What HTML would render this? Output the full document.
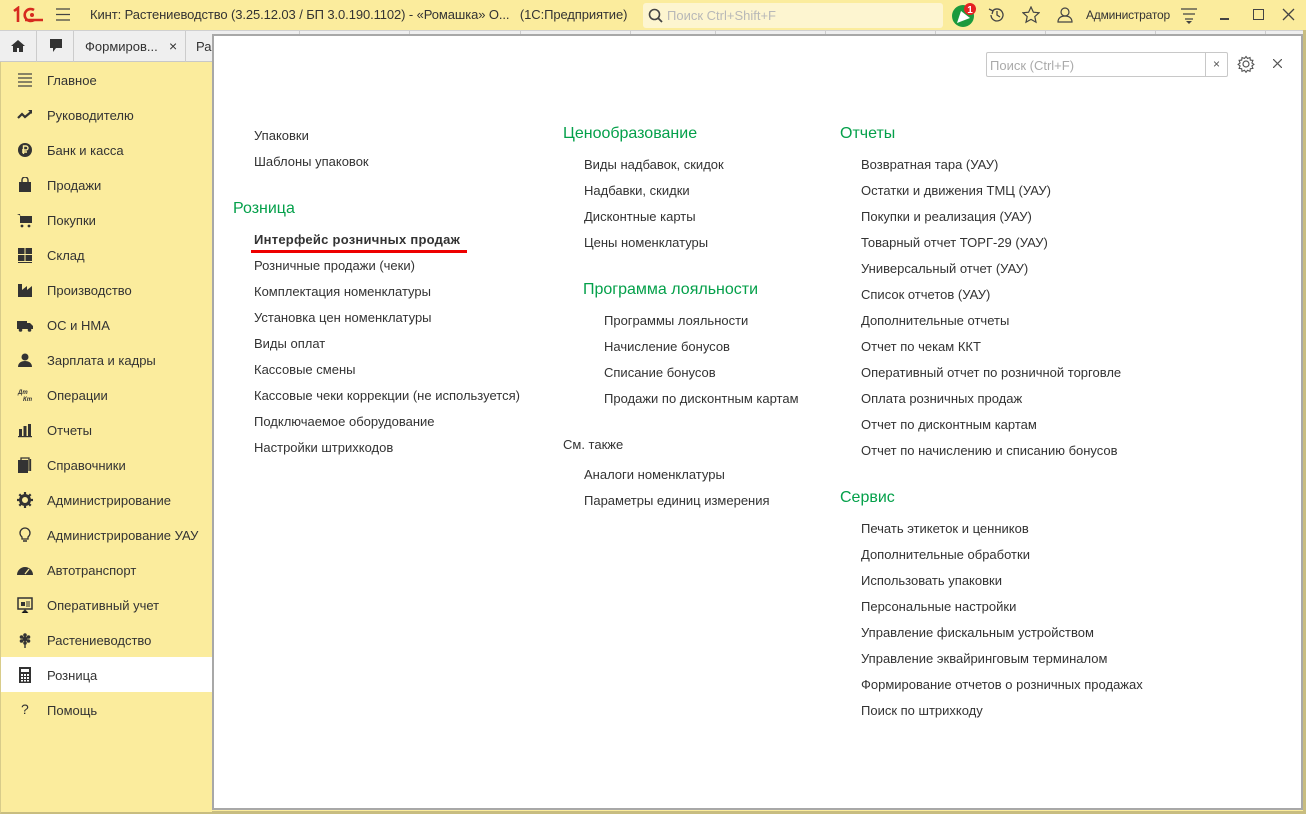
<!DOCTYPE html>
<html><head><meta charset="utf-8"><style>
*{margin:0;padding:0;box-sizing:border-box}
body{width:1306px;height:814px;position:relative;overflow:hidden;background:#fbec9d;font-family:"Liberation Sans",Arial,sans-serif;font-size:13px;color:#333}
.title{position:absolute;left:0;top:0;width:1306px;height:30px;background:#fbec9d}
.title .t{position:absolute;left:90px;top:7px;font-size:13px;color:#333;letter-spacing:-0.1px}
.search{position:absolute;left:643px;top:3px;width:300px;height:25px;background:#fdf5d0;border-radius:3px}
.search span{position:absolute;left:24px;top:5px;color:#b8b8b8;font-size:13px}
.tabs{position:absolute;left:0;top:30px;width:1306px;height:32px;background:#efefef;border-top:1px solid #d0d0d0;border-bottom:1px solid #c8c8c8}
.tabs div{position:absolute;top:0;height:31px;border-right:1px solid #ccc}
.side{position:absolute;left:0;top:62px;width:212px;height:752px;background:#fbec9d;border-left:1px solid #d8cc8a;border-bottom:2px solid #c8bd80}
.side .it{position:absolute;left:0;width:211px;height:35px;font-size:13px;color:#333}
.side .it span{position:absolute;left:46px;top:11px}
.side .it i{position:absolute;left:16px;top:10px;width:16px;height:16px}
.sel{background:#fff}
.panel{position:absolute;left:212px;top:34px;width:1091px;height:776px;background:#fff;border:2px solid #a8a8a8}
.l{position:absolute;font-size:13px;color:#333;white-space:nowrap}
.h{position:absolute;font-size:16px;color:#04a04a;white-space:nowrap}
.fs{position:absolute;left:772px;top:16px;width:242px;height:25px;border:1px solid #c8c8c8;border-radius:2px}
.fs span{position:absolute;left:3px;top:5px;color:#aaa}
.fs b{position:absolute;right:0;top:0;width:22px;height:23px;border-left:1px solid #c8c8c8;font-weight:normal;text-align:center;line-height:22px;font-size:12px;color:#555}
</style></head><body>
<div class="title">
<svg style="position:absolute;left:12px;top:6px" width="32" height="18" viewBox="0 0 32 18"><path d="M2 5l4-3v14" stroke="#d62a1f" stroke-width="2.6" fill="none"/><path d="M22 4a6 6 0 1 0 0 10" stroke="#d62a1f" stroke-width="2.6" fill="none"/><path d="M13 14h18" stroke="#d62a1f" stroke-width="2.4"/><circle cx="20" cy="9" r="2" fill="#d62a1f"/></svg>
<svg style="position:absolute;left:56px;top:8px" width="14" height="13"><path d="M0 1h14M0 6.5h14M0 12h14" stroke="#444" stroke-width="1.3"/></svg>
<div class="t">Кинт: Растениеводство (3.25.12.03 / БП 3.0.190.1102) - «Ромашка» О...&nbsp;&nbsp; (1С:Предприятие)</div>
<div class="search"><svg style="position:absolute;left:5px;top:5px" width="15" height="15"><circle cx="6.5" cy="6.5" r="5" stroke="#444" stroke-width="1.6" fill="none"/><path d="M10 10l4 4" stroke="#444" stroke-width="1.8"/></svg><span>Поиск Ctrl+Shift+F</span></div>
<svg style="position:absolute;left:950px;top:2px" width="30" height="26"><circle cx="13" cy="14" r="11" fill="#1b9a3d"/><path d="M7 21l4-12 9 7z" fill="#fff"/><circle cx="20" cy="7" r="6" fill="#e52222"/><text x="20" y="11" font-size="10" font-weight="bold" fill="#fff" text-anchor="middle" font-family="Liberation Sans">1</text></svg>
<svg style="position:absolute;left:988px;top:6px" width="18" height="18"><path d="M3 9a6 6 0 1 0 2-4.5" stroke="#444" stroke-width="1.3" fill="none"/><path d="M1 3l4 2-1 3" stroke="#444" stroke-width="1.3" fill="none"/><path d="M9 5v4l3 2" stroke="#444" stroke-width="1.3" fill="none"/></svg>
<svg style="position:absolute;left:1022px;top:6px" width="18" height="18"><path d="M9 1l2.4 5.2 5.6.6-4.2 3.8 1.2 5.6L9 13.4 4 16.2l1.2-5.6L1 6.8l5.6-.6z" stroke="#444" stroke-width="1.2" fill="none"/></svg>
<svg style="position:absolute;left:1056px;top:6px" width="18" height="18"><circle cx="9" cy="6" r="4" stroke="#444" stroke-width="1.2" fill="none"/><path d="M2 16c0-4 3-6 7-6s7 2 7 6z" stroke="#444" stroke-width="1.2" fill="none"/></svg>
<div style="position:absolute;left:1086px;top:8px;font-size:12px;color:#333;letter-spacing:-0.2px">Администратор</div>
<svg style="position:absolute;left:1180px;top:7px" width="18" height="18"><path d="M1 2h16M3 7h12M5 12h8" stroke="#444" stroke-width="1.3"/><path d="M6 14l3 3 3-3z" fill="#444"/></svg>
<div style="position:absolute;left:1220px;top:18px;width:9px;height:1.5px;background:#444"></div>
<div style="position:absolute;left:1253px;top:9px;width:11px;height:11px;border:1.5px solid #444"></div>
<svg style="position:absolute;left:1282px;top:8px" width="13" height="13"><path d="M1 1l11 11M12 1L1 12" stroke="#444" stroke-width="1.3"/></svg>
</div>
<div class="tabs">
<div style="left:0;width:37px"><svg style="position:absolute;left:11px;top:8px" width="14" height="14"><path d="M7 1L0 7h2v6h4V9h2v4h4V7h2z" fill="#333"/></svg></div>
<div style="left:37px;width:37px"><svg style="position:absolute;left:11px;top:7px" width="16" height="16"><path d="M2 1h12v9H8l-3 4v-4H2z" fill="#333"/></svg></div>
<div style="left:74px;width:112px"><span style="position:absolute;left:11px;top:8px">Формиров...</span><span style="position:absolute;left:95px;top:7px;font-size:14px">×</span></div>
<div style="left:186px;width:114px"><span style="position:absolute;left:10px;top:8px">Ра</span></div>
<div style="left:300px;width:110px"></div><div style="left:410px;width:111px"></div><div style="left:521px;width:110px"></div><div style="left:631px;width:85px"></div><div style="left:716px;width:110px"></div><div style="left:826px;width:110px"></div><div style="left:936px;width:110px"></div><div style="left:1046px;width:110px"></div><div style="left:1156px;width:110px"></div>
</div>
<div class="side">
<div class="it" style="top:0"><i><svg width="16" height="16"><path d="M1 2h14M1 6h14M1 10h14M1 14h14" stroke="#444" stroke-width="1.2"/></svg></i><span>Главное</span></div>
<div class="it" style="top:35px"><i><svg width="16" height="16"><path d="M1 11l4-4 3 3 6-5" stroke="#333" stroke-width="2.2" fill="none"/><path d="M11 3h4v4z" fill="#333"/></svg></i><span>Руководителю</span></div>
<div class="it" style="top:70px"><i><svg width="16" height="16"><circle cx="8" cy="8" r="7" fill="#333"/><path d="M6.5 12V4h2.5a2 2 0 0 1 0 4H5M5 10h5" stroke="#fbec9d" stroke-width="1.4" fill="none"/></svg></i><span>Банк и касса</span></div>
<div class="it" style="top:105px"><i><svg width="16" height="16"><rect x="2" y="5" width="12" height="10" fill="#333"/><path d="M5 6V3a3 3 0 0 1 6 0v3" stroke="#333" stroke-width="1.4" fill="none"/></svg></i><span>Продажи</span></div>
<div class="it" style="top:140px"><i><svg width="16" height="16"><path d="M0 2h3l1 9h10l1-7H4" fill="#333"/><rect x="3" y="4" width="12" height="7" fill="#333"/><circle cx="5" cy="14" r="1.4" fill="#333"/><circle cx="12" cy="14" r="1.4" fill="#333"/></svg></i><span>Покупки</span></div>
<div class="it" style="top:175px"><i><svg width="16" height="16"><rect x="1" y="1" width="6.5" height="6" fill="#333"/><rect x="8.5" y="1" width="6.5" height="6" fill="#333"/><rect x="1" y="8" width="6.5" height="6" fill="#333"/><rect x="8.5" y="8" width="6.5" height="6" fill="#333"/><rect x="1" y="15" width="14" height="1" fill="#333"/></svg></i><span>Склад</span></div>
<div class="it" style="top:210px"><i><svg width="16" height="16"><path d="M1 15V2h4v6l5-4v4l5-4v11z" fill="#333"/></svg></i><span>Производство</span></div>
<div class="it" style="top:245px"><i><svg width="16" height="16"><rect x="0" y="4" width="10" height="8" fill="#333"/><path d="M10 6h3l3 3v3h-6z" fill="#333"/><circle cx="3.5" cy="13" r="1.8" fill="#333"/><circle cx="12.5" cy="13" r="1.8" fill="#333"/></svg></i><span>ОС и НМА</span></div>
<div class="it" style="top:280px"><i><svg width="16" height="16"><circle cx="8" cy="5" r="3.5" fill="#333"/><path d="M1 15c0-4 3-6 7-6s7 2 7 6z" fill="#333"/></svg></i><span>Зарплата и кадры</span></div>
<div class="it" style="top:315px"><i><svg width="16" height="16"><text x="1" y="7" font-size="6" font-weight="bold" fill="#333" font-family="Liberation Sans">Дт</text><text x="6" y="14" font-size="6" font-weight="bold" fill="#333" font-family="Liberation Sans">Кт</text></svg></i><span>Операции</span></div>
<div class="it" style="top:350px"><i><svg width="16" height="16"><rect x="2" y="7" width="3" height="7" fill="#333"/><rect x="6.5" y="4" width="3" height="10" fill="#333"/><rect x="11" y="2" width="3" height="12" fill="#333"/><rect x="1" y="14" width="14" height="1.2" fill="#333"/></svg></i><span>Отчеты</span></div>
<div class="it" style="top:385px"><i><svg width="16" height="16"><rect x="1" y="3" width="10" height="13" fill="#333"/><path d="M4 3V1h8v13M13.5 2v12" stroke="#333" stroke-width="1.3" fill="none"/></svg></i><span>Справочники</span></div>
<div class="it" style="top:420px"><i><svg width="16" height="16"><circle cx="8" cy="8" r="4.5" fill="none" stroke="#333" stroke-width="3"/><path d="M8 0v4M8 12v4M0 8h4M12 8h4M2.3 2.3l2.8 2.8M10.9 10.9l2.8 2.8M2.3 13.7l2.8-2.8M10.9 5.1l2.8-2.8" stroke="#333" stroke-width="2.2"/></svg></i><span>Администрирование</span></div>
<div class="it" style="top:455px"><i><svg width="16" height="16"><path d="M5 10a5 5 0 1 1 6 0v2H5z" fill="none" stroke="#333" stroke-width="1.3"/><path d="M6 14h4" stroke="#333" stroke-width="1.5"/></svg></i><span>Администрирование УАУ</span></div>
<div class="it" style="top:490px"><i><svg width="16" height="16"><path d="M0 13a8 8 0 0 1 16 0z" fill="#333"/><path d="M8 12l4-5" stroke="#fbec9d" stroke-width="1.3"/></svg></i><span>Автотранспорт</span></div>
<div class="it" style="top:525px"><i><svg width="16" height="16"><rect x="1" y="1" width="14" height="11" fill="none" stroke="#333" stroke-width="1.5"/><rect x="4" y="5" width="4" height="4" fill="#333"/><path d="M9 5h4M9 7h4M9 9h4M8 12v4M5 16l3-3 3 3" stroke="#333" stroke-width="1"/></svg></i><span>Оперативный учет</span></div>
<div class="it" style="top:560px"><i><svg width="16" height="16"><circle cx="8" cy="7" r="2.5" fill="#333"/><circle cx="8" cy="3" r="1.8" fill="#333"/><circle cx="4.5" cy="5" r="1.8" fill="#333"/><circle cx="11.5" cy="5" r="1.8" fill="#333"/><circle cx="4.5" cy="9" r="1.8" fill="#333"/><circle cx="11.5" cy="9" r="1.8" fill="#333"/><circle cx="8" cy="11" r="1.8" fill="#333"/><path d="M8 12v4" stroke="#333" stroke-width="1.4"/></svg></i><span>Растениеводство</span></div>
<div class="it sel" style="top:595px"><i><svg width="16" height="16"><rect x="2" y="0" width="12" height="16" fill="#333"/><rect x="4" y="2" width="8" height="3" fill="#fff"/><path d="M4 7h2v2H4zM7 7h2v2H7zM10 7h2v2h-2zM4 10h2v2H4zM7 10h2v2H7zM10 10h2v2h-2zM4 13h2v1.5H4zM7 13h2v1.5H7zM10 13h2v1.5h-2z" fill="#fff"/></svg></i><span>Розница</span></div>
<div class="it" style="top:630px"><i style="font-size:14px;font-style:normal;left:20px;top:9px">?</i><span>Помощь</span></div>
</div>
<div style="position:absolute;left:1303px;top:30px;width:3px;height:784px;background:#c8bd80"></div>
<div style="position:absolute;left:212px;top:811px;width:1094px;height:3px;background:#c8bd80"></div>
<div class="panel">
<div class="fs"><span>Поиск (Ctrl+F)</span><b>×</b></div>
<svg style="position:absolute;left:1023px;top:19px" width="18" height="18"><circle cx="9" cy="9" r="3" fill="none" stroke="#555" stroke-width="1.2"/><path d="M9 1.5l1.5 2 2.5-1 .3 2.6 2.6.3-1 2.5 2 1.5-2 1.5 1 2.5-2.6.3-.3 2.6-2.5-1-1.5 2-1.5-2-2.5 1-.3-2.6-2.6-.3 1-2.5-2-1.5 2-1.5-1-2.5 2.6-.3.3-2.6 2.5 1z" fill="none" stroke="#555" stroke-width="1.1"/></svg>
<svg style="position:absolute;left:1059px;top:23px" width="9" height="9"><path d="M0 0l9 9M9 0L0 9" stroke="#555" stroke-width="1.2"/></svg>
</div>
<div class="l" style="left:254px;top:128px">Упаковки</div>
<div class="l" style="left:254px;top:154px">Шаблоны упаковок</div>
<div class="h" style="left:233px;top:200px">Розница</div>
<div class="l" style="left:254px;top:232px;font-weight:bold;letter-spacing:0.25px">Интерфейс розничных продаж</div>
<div style="position:absolute;left:251px;top:250px;width:216px;height:3px;background:#e00"></div>
<div class="l" style="left:254px;top:258px">Розничные продажи (чеки)</div>
<div class="l" style="left:254px;top:284px">Комплектация номенклатуры</div>
<div class="l" style="left:254px;top:310px">Установка цен номенклатуры</div>
<div class="l" style="left:254px;top:336px">Виды оплат</div>
<div class="l" style="left:254px;top:362px">Кассовые смены</div>
<div class="l" style="left:254px;top:388px">Кассовые чеки коррекции (не используется)</div>
<div class="l" style="left:254px;top:414px">Подключаемое оборудование</div>
<div class="l" style="left:254px;top:440px">Настройки штрихкодов</div>

<div class="h" style="left:563px;top:125px">Ценообразование</div>
<div class="l" style="left:584px;top:157px">Виды надбавок, скидок</div>
<div class="l" style="left:584px;top:183px">Надбавки, скидки</div>
<div class="l" style="left:584px;top:209px">Дисконтные карты</div>
<div class="l" style="left:584px;top:235px">Цены номенклатуры</div>
<div class="h" style="left:583px;top:281px">Программа лояльности</div>
<div class="l" style="left:604px;top:313px">Программы лояльности</div>
<div class="l" style="left:604px;top:339px">Начисление бонусов</div>
<div class="l" style="left:604px;top:365px">Списание бонусов</div>
<div class="l" style="left:604px;top:391px">Продажи по дисконтным картам</div>
<div class="l" style="left:563px;top:437px">См. также</div>
<div class="l" style="left:584px;top:467px">Аналоги номенклатуры</div>
<div class="l" style="left:584px;top:493px">Параметры единиц измерения</div>

<div class="h" style="left:840px;top:125px">Отчеты</div>
<div class="l" style="left:861px;top:157px">Возвратная тара (УАУ)</div>
<div class="l" style="left:861px;top:183px">Остатки и движения ТМЦ (УАУ)</div>
<div class="l" style="left:861px;top:209px">Покупки и реализация (УАУ)</div>
<div class="l" style="left:861px;top:235px">Товарный отчет ТОРГ-29 (УАУ)</div>
<div class="l" style="left:861px;top:261px">Универсальный отчет (УАУ)</div>
<div class="l" style="left:861px;top:287px">Список отчетов (УАУ)</div>
<div class="l" style="left:861px;top:313px">Дополнительные отчеты</div>
<div class="l" style="left:861px;top:339px">Отчет по чекам ККТ</div>
<div class="l" style="left:861px;top:365px">Оперативный отчет по розничной торговле</div>
<div class="l" style="left:861px;top:391px">Оплата розничных продаж</div>
<div class="l" style="left:861px;top:417px">Отчет по дисконтным картам</div>
<div class="l" style="left:861px;top:443px">Отчет по начислению и списанию бонусов</div>
<div class="h" style="left:840px;top:489px">Сервис</div>
<div class="l" style="left:861px;top:521px">Печать этикеток и ценников</div>
<div class="l" style="left:861px;top:547px">Дополнительные обработки</div>
<div class="l" style="left:861px;top:573px">Использовать упаковки</div>
<div class="l" style="left:861px;top:599px">Персональные настройки</div>
<div class="l" style="left:861px;top:625px">Управление фискальным устройством</div>
<div class="l" style="left:861px;top:651px">Управление эквайринговым терминалом</div>
<div class="l" style="left:861px;top:677px">Формирование отчетов о розничных продажах</div>
<div class="l" style="left:861px;top:703px">Поиск по штрихкоду</div>
</body></html>
